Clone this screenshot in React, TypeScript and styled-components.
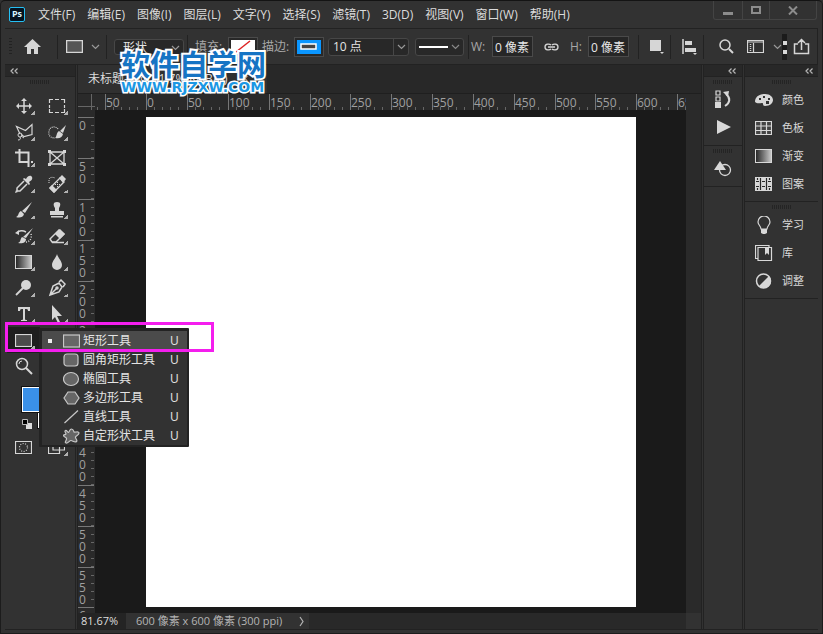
import React from "react";
import styled, { createGlobalStyle } from "styled-components";

const GlobalStyle = createGlobalStyle`
  *, *::before, *::after { box-sizing: border-box; }
  html, body, #root { height: 100%; margin: 0; }
  body {
    background: #323232;
    color: #dcdcdc;
    font: 12px/16px "Open Sans", "Noto Sans CJK SC", sans-serif;
    overflow: hidden;
  }
  button, input, select { font: inherit; color: inherit; }
  svg { display: block; flex: none; }
`;

const line = "#222222";

const Window = styled.div`
  display: flex;
  flex-direction: column;
  height: 100vh;
  background: #323232;
  border: 1px solid #1c1c1c;
  border-top-color: #141414;
  border-radius: 5px 5px 0 0;
`;

const MenuBar = styled.header`
  display: flex;
  height: 27px;
  flex: none;
  padding-left: 8px;
`;
const Logo = styled.div`
  align-self: center;
  width: 16px;
  height: 15px;
  border: 1px solid #26c0f4;
  border-radius: 2px;
  background: #04121f;
  color: #d6f3ff;
  font-size: 9px;
  font-weight: 700;
  line-height: 12px;
  text-align: center;
`;
const Menus = styled.nav`
  display: flex;
  align-items: center;
  gap: 12px;
  margin-left: 13px;
  flex: 1;
`;
const MenuButton = styled.button`
  padding: 0;
  border: 0;
  background: none;
  white-space: nowrap;
`;
const WindowControls = styled.div`
  display: flex;
  height: 19px;
  margin-right: 5px;
  border: 1px solid #444;
  border-top: 0;
  border-radius: 0 0 3px 3px;
`;
const WindowButton = styled.button<{ $w: number }>`
  display: grid;
  place-items: center;
  width: ${(p) => p.$w}px;
  padding: 0;
  border: 0;
  background: none;
  color: #8c8c8c;
  & + & { border-left: 1px solid #444; }
`;

const OptionsBar = styled.div`
  display: flex;
  align-items: center;
  flex: none;
  height: 37px;
  margin: 0 4px;
  padding: 0 7px 0 4px;
  border: solid ${line};
  border-width: 1px 1px 1px 0;
`;
const DotGrip = styled.div`
  width: 3px;
  height: 18px;
  background: repeating-linear-gradient(#222 0 1px, transparent 1px 3px);
`;
const Separator = styled.i<{ $l?: number; $r?: number }>`
  width: 1px;
  height: 24px;
  flex: none;
  margin: 0 ${(p) => p.$r ?? 0}px 0 ${(p) => p.$l ?? 0}px;
  background: #222;
`;
const ToolButton = styled.button<{ $w: number; $dim?: boolean }>`
  display: grid;
  place-items: center;
  flex: none;
  width: ${(p) => p.$w}px;
  height: 24px;
  padding: 0;
  border: 0;
  background: none;
  color: ${(p) => (p.$dim ? "#999" : "#d6d6d6")};
`;
const SelectShell = styled.div<{ $w: number; $h: number; $l: number }>`
  display: grid;
  grid-template-columns: 1fr 15px;
  align-items: center;
  flex: none;
  width: ${(p) => p.$w}px;
  height: ${(p) => p.$h}px;
  margin-left: ${(p) => p.$l}px;
  border: 1px solid #474747;
  border-radius: 3px;
  background: #282828;
  color: #999;
  & > * { grid-row: 1; }
  & > svg {
    grid-column: 2;
    justify-self: center;
    pointer-events: none;
  }
  & > select {
    grid-column: 1 / 3;
    width: 100%;
    padding: 0 0 0 8px;
    border: 0;
    appearance: none;
    background: none;
    color: #e4e4e4;
  }
  & > input {
    width: 100%;
    padding: 0 4px;
    border: 0;
    background: none;
    color: #e4e4e4;
  }
  & > button {
    height: 100%;
    grid-column: 2;
    display: grid;
    place-items: center;
    padding: 0;
    border: 0;
    border-left: 1px solid #474747;
    background: none;
  }
`;
const LineButton = styled.button`
  display: flex;
  align-items: center;
  justify-content: space-between;
  width: 49px;
  height: 18px;
  margin-left: 6px;
  padding: 0 3px;
  border: 1px solid #474747;
  border-radius: 3px;
  background: #282828;
  color: #888 !important;
  &::before {
    content: "";
    width: 29px;
    height: 2px;
    background: #fff;
  }
`;
const FieldLabel = styled.label<{ $w: number; $l?: number }>`
  flex: none;
  width: ${(p) => p.$w}px;
  margin-left: ${(p) => p.$l ?? 0}px;
  color: #a8a8a8;
  white-space: nowrap;
`;
const SizeInput = styled.input`
  flex: none;
  width: 41px;
  height: 21px;
  padding: 0 2px;
  border: 1px solid #4a4a4a;
  background: #262626;
  color: #e8e8e8 !important;
`;
const Swatch = styled.button<{ $fill: string }>`
  display: grid;
  place-items: center;
  flex: none;
  width: 30px;
  height: 20px;
  padding: 0;
  border: 1px solid #4a4a4a;
  background: ${(p) => p.$fill};
  box-shadow: inset 0 0 0 2px #282828;
`;
const Push = styled.span`
  flex: 1;
`;
const DockSlot = styled.i`
  flex: none;
  width: 5px;
  height: 26px;
  margin-right: 5px;
  background: linear-gradient(#d8d8d8 0 0) center 7px / 4px 4px no-repeat,
    linear-gradient(#d8d8d8 0 0) center 16px / 4px 4px no-repeat, #1b1b1b;
`;

const Body = styled.main`
  display: flex;
  flex: 1;
  min-height: 0;
  margin: 0 4px;
  border-bottom: 1px solid ${line};
`;
const BottomEdge = styled.footer`
  flex: none;
  height: 3px;
`;
const SideColumn = styled.aside<{ $w: number }>`
  display: flex;
  flex-direction: column;
  flex: none;
  width: ${(p) => p.$w}px;
`;
const CollapseBar = styled.button<{ $pad: number; $left?: boolean }>`
  display: flex;
  align-items: center;
  justify-content: ${(p) => (p.$left ? "flex-start" : "flex-end")};
  flex: none;
  height: 12px;
  padding: 0 ${(p) => p.$pad}px;
  border: 0;
  border-bottom: 1px solid ${line};
  background: #282828;
  color: #b8b8b8 !important;
`;
const Grip = styled.div`
  flex: none;
  align-self: center;
  width: 20px;
  height: 4px;
  margin: 3px 0 2px;
  background: repeating-linear-gradient(90deg, #242424 0 1px, transparent 1px 2px);
`;
const PanelSet = styled.section`
  display: flex;
  flex-direction: column;
  border-bottom: 1px solid ${line};
  padding-bottom: 3px;
`;
const PanelButton = styled.button`
  display: flex;
  align-items: center;
  height: 28px;
  padding: 0 0 0 10px;
  border: 0;
  background: none;
  color: #d8d8d8;
  font-size: 11px;
  white-space: nowrap;
`;
const PanelIcon = styled.span`
  flex: none;
  width: 27px;
`;
const StripButton = styled.button`
  display: grid;
  place-items: center;
  height: 28px;
  padding: 0 0 2px;
  border: 0;
  background: none;
  color: #d8d8d8;
`;
const Rail = styled.div`
  flex: none;
  width: 3px;
  border: solid ${line};
  border-width: 0 1px;
`;

const ToolGrid = styled.div`
  display: grid;
  grid-template-columns: 33px 33px;
  grid-auto-rows: 26px;
  margin: 7px 0 0 2px;
`;
const Tool = styled.button<{ $active?: boolean; $menu?: boolean }>`
  display: grid;
  place-items: center;
  padding: 0;
  border: 0;
  color: #d6d6d6;
  background: ${(p) =>
    p.$menu
      ? "linear-gradient(135deg, transparent 50%, #b0b0b0 50%) right 5px bottom 4px / 4px 4px no-repeat"
      : "none"};
  background-color: ${(p) => (p.$active ? "#1e1e1e" : "transparent")};
`;
const Colors = styled.div`
  margin: 8px 0 0 17px;
`;
const ColorSwatches = styled.div`
  position: relative;
  height: 32px;
`;
const Foreground = styled.button`
  position: absolute;
  left: 0;
  top: 0;
  width: 26px;
  height: 25px;
  padding: 0;
  border: 1px solid #fff;
  outline: 1px solid #111;
  background: #3a90e8;
`;
const Background = styled.button`
  position: absolute;
  left: 16px;
  top: 16px;
  width: 26px;
  height: 25px;
  padding: 0;
  border: 1px solid #fff;
  outline: 1px solid #111;
  background: #e23c44;
`;
const ModeRow = styled.div`
  display: grid;
  grid-template-columns: 33px 33px;
  height: 26px;
  margin: 5px 0 0 2px;
`;

const Document = styled.section`
  display: flex;
  flex-direction: column;
  flex: 1;
  min-width: 0;
`;
const TabBar = styled.div`
  display: flex;
  flex: none;
  height: 29px;
  background: #282828;
  border-bottom: 1px solid #1f1f1f;
`;
const Tab = styled.button`
  display: flex;
  align-items: center;
  gap: 14px;
  width: 189px;
  padding: 0 10px;
  border: 0;
  background: #303030;
  white-space: nowrap;
`;
const Workspace = styled.div`
  display: grid;
  flex: 1;
  min-height: 0;
  grid-template-columns: 17px 1fr 15px;
  grid-template-rows: 16px 1fr;
`;
const Origin = styled.div`
  background: linear-gradient(90deg, transparent 13px, #666 13px 14px, transparent 14px),
    linear-gradient(transparent 12px, #666 12px 13px, transparent 13px), #2a2a2a;
`;
const TopRuler = styled.div`
  display: flex;
  overflow: hidden;
  padding-left: 10px;
  background: linear-gradient(#666 0 0) 2px 100% / 1px 3px no-repeat, #2a2a2a;
`;
const TopMark = styled.span`
  flex: 0 0 41px;
  height: 16px;
  padding: 2px 1px 0 0;
  border-left: 1px solid #777;
  background: linear-gradient(90deg, transparent 7px, #666 7px) 0 100% / 8px 3px repeat-x content-box;
  color: #a0a0a0;
  line-height: 14px;
  &:nth-child(6n) { flex-basis: 40px; }
`;
const SideRuler = styled.div`
  min-height: 0;
  overflow: hidden;
  padding: 7px 1px 0 0;
  background: #2a2a2a;
`;
const SideMark = styled.div`
  height: 41px;
  padding: 2px 8px 0 1px;
  border-top: 1px solid #777;
  background: linear-gradient(transparent 7px, #666 7px) 100% 0 / 3px 8px repeat-y;
  color: #a0a0a0;
  line-height: 12px;
  overflow-wrap: anywhere;
  &:nth-child(6n) { height: 40px; }
`;
const Pasteboard = styled.div`
  min-height: 0;
  overflow: hidden;
  padding: 7px 50px 6px 51px;
  background: #1a1a1a;
`;
const Artboard = styled.div`
  height: 100%;
  background: #fff;
`;
const ScrollTrack = styled.div`
  grid-column: 3;
  grid-row: 1 / 3;
  background: #2a2a2a;
`;
const StatusBar = styled.div`
  display: grid;
  grid-template-columns: 48px 183px 1fr 15px;
  flex: none;
  height: 16px;
  background: #292929;
  color: #b4b4b4;
  font-size: 11px;
  line-height: 16px;
`;
const Zoom = styled.input`
  width: 100%;
  min-width: 0;
  padding: 0 0 0 3px;
  border: 0;
  background: #242424;
  color: #dedede !important;
`;
const Info = styled.button`
  display: flex;
  align-items: center;
  justify-content: space-between;
  padding: 0 4px 0 10px;
  border: 0;
  background: #323232;
  white-space: nowrap;
`;
const Corner = styled.span`
  grid-column: 4;
  background: #323232;
`;

const Flyout = styled.div`
  position: absolute;
  left: 39px;
  top: 328px;
  width: 150px;
  padding: 3px 2px 2px 3px;
  border-radius: 1px;
  background: #232323;
`;
const FlyoutItem = styled.button<{ $on?: boolean }>`
  display: grid;
  grid-template-columns: 15px 17px 1fr 17px;
  align-items: center;
  width: 100%;
  height: 19px;
  padding: 1px 0 0 6px;
  border: 0;
  background: ${(p) => (p.$on ? "#4b4b4b" : "#323232")};
  color: #e4e4e4;
  text-align: left;
  white-space: nowrap;
  &::before {
    content: "";
    width: 4px;
    height: 4px;
    background: ${(p) => (p.$on ? "#eee" : "transparent")};
  }
`;
const FlyoutName = styled.span`
  padding-left: 3px;
`;
const Highlight = styled.div`
  position: absolute;
  left: 5px;
  top: 322px;
  width: 209px;
  height: 30px;
  border: 3px solid #f41eee;
  pointer-events: none;
`;
const Watermark = styled.div`
  position: absolute;
  left: 121px;
  top: 48px;
  pointer-events: none;
  color: #1674c4;
  font-weight: 700;
  white-space: nowrap;
  -webkit-text-stroke: 4px #fff;
  paint-order: stroke fill;
`;
const WatermarkName = styled.div`
  font-size: 29px;
  line-height: 34px;
`;
const WatermarkSite = styled.div`
  font: 700 14px/10px "DejaVu Sans", sans-serif;
  color: #1c98e4;
  -webkit-text-stroke-width: 3px;
`;

const Svg = ({ w = 18, h = 18, children }: { w?: number; h?: number; children: React.ReactNode }) => (
  <svg width={w} height={h} viewBox={`0 0 ${w} ${h}`} fill="none" stroke="currentColor" strokeWidth="1.5" aria-hidden="true">
    {children}
  </svg>
);
const solid = { fill: "currentColor", stroke: "none" };
const Chevron = () => (
  <Svg w={9} h={6}><path d="M1 1l3.5 3.5L8 1" strokeWidth="1.2" /></Svg>
);
const DoubleChevron = () => (
  <Svg w={8} h={6}><path d="M3.500 .5L1 3l2.500 2.500M7.500 .5L5 3l2.500 2.500" strokeWidth="1.2" /></Svg>
);
const GradientIcon = ({ id }: { id: string }) => (
  <Svg w={17} h={14}>
    <defs><linearGradient id={id}><stop stopColor="#222" /><stop offset="1" stopColor="#ccc" /></linearGradient></defs>
    <rect x=".5" y=".5" width="16" height="13" fill={`url(#${id})`} strokeWidth="1" />
  </Svg>
);

const tools: { name: string; icon: React.ReactNode; plain?: boolean; active?: boolean }[] = [
  { name: "移动工具", icon: <Svg><path d="M9 3v12M3 9h12" /><path d="M9 1l3 3H6zM9 17l-3-3h6zM1 9l3-3v6zM17 9l-3 3V6z" {...solid} /></Svg> },
  { name: "矩形选框工具", icon: <Svg><path d="M1.500 6V2.500H5M7 2.500h4M13 2.500h3.500V6M16.500 8v3M16.500 12v3.500H13M11 15.500H7M5 15.500H1.500V12M1.500 11V8" strokeWidth="1.200" /></Svg> },
  { name: "多边形套索工具", icon: <Svg><path d="M5 11L1.500 3.500l9 4L17 1.500v10l-8 2-3-2" strokeWidth="1.200" /><circle cx="5" cy="12" r="2" strokeWidth="1" /><path d="M6 13l3 2M5 14c1 2 0 3-2 3" strokeWidth="1" /></Svg> },
  { name: "快速选择工具", icon: <Svg><path d="M10 6C8 3 2 3 1 8c-1 5 2 7 6 7" strokeDasharray="1 1" strokeWidth="1.200" /><path d="M18 2l-3 8-3-2zM11 8l4 3c-1 4-4 5-8 4 2-1 1-5 4-7z" {...solid} /></Svg> },
  { name: "裁剪工具", icon: <Svg><path d="M4.500 0v13H14M0 3.500h13.500V18M16 13h2" strokeWidth="2" /></Svg> },
  { name: "图框工具", plain: true, icon: <Svg><path d="M2 3h14v12H2zM2 3l14 12M16 3L2 15" strokeWidth="1.300" /><path d="M0 1h3v3H0zM15 1h3v3h-3zM0 14h3v3H0zM15 14h3v3h-3z" {...solid} /></Svg> },
  { name: "吸管工具", icon: <Svg><path d="M9 6L2 13v3h3l7-7" strokeWidth="1.500" /><path d="M8 4l1-1 2 1c2-4 5-4 6-2s-1 4-3 5l1 2-1 1zM0 18l1-3 2 2z" {...solid} /></Svg> },
  { name: "污点修复画笔工具", icon: <Svg><path d="M12 3l4 4L6 17l-4-4z" strokeWidth="1.400" /><path d="M11 3l3-3 4 4-3 4zM4 10l5 5-3 3-5-5z" {...solid} /><path d="M9 7h1v1H9zM7 9h1v1H7zM11 9h1v1h-1zM9 11h1v1H9zM9 9h1v1H9z" {...solid} /><path d="M1 8V4c1-2 4-2 6-1" strokeDasharray="1 1" strokeWidth="1" /></Svg> },
  { name: "画笔工具", icon: <Svg><path d="M17 1l-7 11-3-2zM6 10l3 3c-1 4-5 4-8 3 3-1 2-5 5-6z" {...solid} /></Svg> },
  { name: "仿制图章工具", icon: <Svg><path d="M9 1c4 0 4 3 2 6v3h5v4H2v-4h5V7C5 4 5 1 9 1zM3 15h12v1.500H3z" {...solid} /></Svg> },
  { name: "历史记录画笔工具", icon: <Svg><path d="M18 1l-7 10-3-1zM7 10l4 2c0 4-4 5-8 4 3-1 2-4 4-6zM0 6l4-3v5z" {...solid} /><path d="M3 5c3-2 6-1 8 0" /><path d="M16 7c1 4-1 8-5 8" strokeDasharray="1 1.500" /></Svg> },
  { name: "橡皮擦工具", icon: <Svg><path d="M2 12L11 3l5 4-8 8H4z" strokeWidth="1.400" /><path d="M7 7l5-5 5 5-5 5z" {...solid} /><path d="M4 15.500h12" /></Svg> },
  { name: "渐变工具", icon: <GradientIcon id="tool-gradient" /> },
  { name: "模糊工具", icon: <Svg><path d="M9 1c1 4 5 7 5 11a5 5 0 01-10 0c0-4 4-7 5-11z" {...solid} /></Svg> },
  { name: "减淡工具", icon: <Svg><circle cx="11" cy="6" r="5" {...solid} /><path d="M8 9l-7 7" strokeWidth="1.800" /></Svg> },
  { name: "钢笔工具", icon: <Svg><path d="M2 16l3-9 6-3 3 4-3 5zM3 15l6-6M11 3l2-2 4 4-2 3" /><circle cx="9" cy="9" r="1" /></Svg> },
  { name: "文字工具", icon: <Svg><path d="M3 2h12v4h-2c0-2-1-2-3-2v10c0 1 1 1 2 1v1H6v-1c1 0 2 0 2-1V4C6 4 5 4 5 6H3z" {...solid} /></Svg> },
  { name: "路径选择工具", icon: <Svg><path d="M4 0l10 11-5 0 3 6-2 1-3-6-3 3z" {...solid} /></Svg> },
  { name: "矩形工具", active: true, icon: <Svg w={17} h={13}><rect x=".5" y=".5" width="16" height="12" fill="#4b4b4b" strokeWidth="1.200" /></Svg> },
];

const shapes: { name: string; icon: React.ReactNode }[] = [
  { name: "矩形工具", icon: <rect x=".5" y="2" width="16" height="12" /> },
  { name: "圆角矩形工具", icon: <rect x="1" y="2" width="14" height="12" rx="3" /> },
  { name: "椭圆工具", icon: <ellipse cx="8" cy="8" rx="7.500" ry="6.500" /> },
  { name: "多边形工具", icon: <path d="M5 2h7l4 6-4 6H5L1 8z" /> },
  { name: "直线工具", icon: <path d="M1.500 14L15 1.500" /> },
  { name: "自定形状工具", icon: <path d="M5.500 4.500c1-.5 1-3.500 3-3.500s2 2 2.500 3c1 .5 5-1 5 1s-3 2.500-3.500 4 2.500 3 1 4.500-4-1-5.500-1-3 3-5 2.500S4 12 3.500 10.500 .5 9 .5 7.500 3 7 3 6 1 3 2.500 2.500 4.500 4.500 5.500 4.500z" /> },
];

const ShapeIcon = ({ children }: { children: React.ReactNode }) => (
  <svg width="17" height="16" viewBox="0 0 17 16" fill="#666" stroke="#c8c8c8" strokeWidth="1.200" aria-hidden="true">{children}</svg>
);

const primaryPanels = [
  { name: "颜色", icon: <Svg><path fillRule="evenodd" d="M10 3c5 0 8 3 8 6s-3 6-8 6c-3 0-1-3-3-3s-5 1-7-1C0 6 4 3 10 3zM4 7v2h2V7zM8 5v2h2V5zM13 7v2h2V7zM11 10v3h3v-3z" {...solid} /></Svg> },
  { name: "色板", icon: <Svg w={17} h={14}><path d="M.5 .5h16v13H.5zM.5 5h16M.5 9.500h16M6 .5v13M11.500 .5v13" strokeWidth="1.200" fill="#444" /></Svg> },
  { name: "渐变", icon: <GradientIcon id="panel-gradient" /> },
  { name: "图案", icon: <Svg w={17} h={14}><path d="M0 0h17v14H0z" {...solid} /><path d="M5.500 1v12M11.500 1v12M1 4.500h3M7 4.500h3M13 4.500h3M1 9.500h3M7 9.500h3M13 9.500h3M2.500 1v2M2.500 11v2M14.500 1v2M14.500 11v2" stroke="#282828" strokeWidth="1.200" /></Svg> },
];
const secondaryPanels = [
  { name: "学习", icon: <Svg><path d="M6 13c0-3-3-4-3-7a6 6 0 0112 0c0 3-3 4-3 7z" strokeWidth="1.200" /><path d="M6 13h6v4l-2 1H8l-2-1z" {...solid} /></Svg> },
  { name: "库", icon: <Svg><path d="M3 3.500h13.500v13H3zM3 14.500H.500v-13H14V3" strokeWidth="1.200" /><path d="M10 4h4v7l-2-2-2 2z" {...solid} /></Svg> },
  { name: "调整", icon: <Svg><circle cx="8.500" cy="9" r="7" /><path d="M14 4a7 7 0 01-10 10z" {...solid} /></Svg> },
];

const menus = ["文件(F)", "编辑(E)", "图像(I)", "图层(L)", "文字(Y)", "选择(S)", "滤镜(T)", "3D(D)", "视图(V)", "窗口(W)", "帮助(H)"];
const topMarks = [50, 0, 50, 100, 150, 200, 250, 300, 350, 400, 450, 500, 550, 600, 650];
const sideMarks = [0, 50, 100, 150, 200, 250, 300, 350, 400, 450, 500, 550, 600];

export default function App() {
  return (
    <>
      <GlobalStyle />
      <Window>
        <MenuBar>
          <Logo>Ps</Logo>
          <Menus>{menus.map((m) => <MenuButton key={m}>{m}</MenuButton>)}</Menus>
          <WindowControls>
            <WindowButton $w={28} aria-label="最小化"><Svg w={10} h={10}><path d="M0 8.500h10" strokeWidth="3" /></Svg></WindowButton>
            <WindowButton $w={27} aria-label="最大化"><Svg w={10} h={8}><path d="M1 1h8v6H1z" strokeWidth="2" /></Svg></WindowButton>
            <WindowButton $w={47} aria-label="关闭"><Svg w={10} h={9}><path d="M1 .5l8 8M9 .5l-8 8" strokeWidth="2" /></Svg></WindowButton>
          </WindowControls>
        </MenuBar>

        <OptionsBar>
          <DotGrip />
          <ToolButton $w={40} aria-label="主页"><Svg w={17} h={15}><path d="M8.500 0L17 8h-3v7H10v-5H7v5H3V8H0z" {...solid} /></Svg></ToolButton>
          <Separator $l={5} $r={4} />
          <ToolButton $w={24} aria-label="矩形"><Svg w={17} h={13}><path d="M.5 .5h16v12H.5z" fill="#555" /></Svg></ToolButton>
          <ToolButton $w={18} $dim aria-label="工具预设"><Chevron /></ToolButton>
          <Separator $l={2} />
          <SelectShell $w={70} $h={16} $l={7}>
            <select aria-label="模式"><option>形状</option></select>
            <Chevron />
          </SelectShell>
          <Separator $l={3} $r={7} />
          <FieldLabel $w={33} htmlFor="fill">填充:</FieldLabel>
          <Swatch id="fill" $fill="#fff"><Svg w={26} h={16}><path d="M6 13L20 2" stroke="#d22" strokeWidth="1.500" /></Svg></Swatch>
          <FieldLabel $w={32} $l={4} htmlFor="stroke">描边:</FieldLabel>
          <Swatch id="stroke" $fill="#0a96ff"><Svg w={18} h={8}><path d="M1 1h15v5H1z" fill="#444" stroke="#fff" /></Svg></Swatch>
          <SelectShell $w={81} $h={18} $l={4}>
            <input aria-label="描边宽度" defaultValue="10 点" />
            <button aria-label="选择宽度"><Chevron /></button>
          </SelectShell>
          <LineButton aria-label="描边类型"><Chevron /></LineButton>
          <Separator $l={4} $r={2} />
          <FieldLabel $w={21} htmlFor="width">W:</FieldLabel>
          <SizeInput id="width" defaultValue="0 像素" />
          <ToolButton $w={36} aria-label="链接"><Svg w={15} h={8}><path d="M7 2C6 1 1 0 1 4s5 3 6 2M8 2c1-1 6-2 6 2s-5 3-6 2M4 4h7" strokeWidth="1.300" /></Svg></ToolButton>
          <FieldLabel $w={18} $l={1} htmlFor="height">H:</FieldLabel>
          <SizeInput id="height" defaultValue="0 像素" />
          <Separator $l={9} $r={4} />
          <ToolButton $w={26} aria-label="路径操作"><Svg w={15} h={15}><path d="M1 1h11v11H1zM11 13h4l-2 2z" {...solid} /></Svg></ToolButton>
          <Separator $l={1} $r={5} />
          <ToolButton $w={26} aria-label="路径对齐"><Svg w={15} h={16}><path d="M1 0v15" /><path d="M3 2h7v4H3zM3 9h11v4H3zM11 14h4l-2 2z" {...solid} /></Svg></ToolButton>
          <Separator $l={1} />
          <Push />
          <ToolButton $w={24} aria-label="搜索"><Svg w={15} h={15}><circle cx="6" cy="6" r="5" /><path d="M10 10l4 4" strokeWidth="2" /></Svg></ToolButton>
          <ToolButton $w={34} aria-label="工作区"><Svg w={17} h={13}><path d="M.5 .5h16v12H.5zM1 2h15M6.500 3v9" strokeWidth="1.200" /><path d="M3.500 4v7" strokeDasharray="1 1" /></Svg></ToolButton>
          <ToolButton $w={10} $dim aria-label="工作区菜单"><Chevron /></ToolButton>
          <DockSlot />
          <ToolButton $w={18} aria-label="共享"><Svg w={17} h={17}><path d="M5 6H1.500v9.500h14V6H12M8.500 12V2M5 5l3.500-3.500L12 5" /></Svg></ToolButton>
        </OptionsBar>

        <Body>
          <SideColumn $w={70}>
            <CollapseBar $pad={5} $left aria-label="折叠工具栏"><DoubleChevron /></CollapseBar>
            <Grip />
            <ToolGrid>
              {tools.map((t) => <Tool key={t.name} $active={t.active} $menu={!t.plain} aria-label={t.name}>{t.icon}</Tool>)}
              <span />
              <Tool aria-label="缩放工具"><Svg><circle cx="7" cy="7" r="5.500" /><path d="M11 11l6 6" strokeWidth="2" /><path d="M4 7a3 3 0 013-3" strokeWidth="1" /></Svg></Tool>
            </ToolGrid>
            <Colors>
              <ColorSwatches>
                <Background aria-label="背景色" />
                <Foreground aria-label="前景色" />
              </ColorSwatches>
              <Svg w={10} h={10}><path d="M4 4h6v6H4z" fill="#ddd" stroke="none" /><path d="M.5 .5h5v5h-5z" fill="#000" stroke="#bbb" strokeWidth="1" /></Svg>
            </Colors>
            <ModeRow>
              <Tool aria-label="快速蒙版"><Svg w={17} h={13}><path d="M.5 .5h16v12H.5z" strokeWidth="1.200" /><circle cx="8.500" cy="6.500" r="4" strokeDasharray="1 1.500" strokeWidth="1.200" /></Svg></Tool>
              <Tool $menu aria-label="屏幕模式"><Svg w={17} h={13}><path d="M.5 3.500h11v9H.5zM5 3V.500h11.500V9H5z" strokeWidth="1.200" /></Svg></Tool>
            </ModeRow>
          </SideColumn>
          <Rail />

          <Document>
            <TabBar><Tab><span>未标题-1 @ 81.7%(RGB/8)</span><span>×</span></Tab></TabBar>
            <Workspace>
              <Origin />
              <TopRuler>{topMarks.map((m, i) => <TopMark key={i}>{m}</TopMark>)}</TopRuler>
              <SideRuler>{sideMarks.map((m) => <SideMark key={m}>{m}</SideMark>)}</SideRuler>
              <Pasteboard><Artboard /></Pasteboard>
              <ScrollTrack />
            </Workspace>
            <StatusBar>
              <Zoom aria-label="缩放比例" defaultValue="81.67%" />
              <Info>600 像素 x 600 像素 (300 ppi)<Svg w={6} h={11}><path d="M1 1l3 4.500L1 10" strokeWidth="1.200" /></Svg></Info>
              <Corner />
            </StatusBar>
          </Document>
          <Rail />

          <SideColumn $w={38}>
            <CollapseBar $pad={6} aria-label="展开面板"><DoubleChevron /></CollapseBar>
            <PanelSet>
              <Grip />
              <StripButton aria-label="历史记录"><Svg><path d="M2 1h4v4H2zM2 7h4v4H2z" strokeWidth="1.200" /><path d="M1 12h6v6H1zM9 2l6-1-1 6z" {...solid} /><path d="M12 4c5 4 4 9-1 12" strokeWidth="2" /></Svg></StripButton>
              <StripButton aria-label="动作"><Svg><path d="M3 2l14 7-14 7z" {...solid} /></Svg></StripButton>
            </PanelSet>
            <PanelSet>
              <Grip />
              <StripButton aria-label="形状"><Svg><path d="M6 2l6 9H0z" {...solid} /><circle cx="11" cy="11" r="5.500" strokeWidth="1.300" /></Svg></StripButton>
            </PanelSet>
          </SideColumn>
          <Rail />
          <SideColumn $w={73}>
            <CollapseBar $pad={5} aria-label="折叠面板"><DoubleChevron /></CollapseBar>
            <PanelSet>
              <Grip />
              {primaryPanels.map((p) => <PanelButton key={p.name}><PanelIcon>{p.icon}</PanelIcon>{p.name}</PanelButton>)}
            </PanelSet>
            <PanelSet>
              <Grip />
              {secondaryPanels.map((p) => <PanelButton key={p.name}><PanelIcon>{p.icon}</PanelIcon>{p.name}</PanelButton>)}
            </PanelSet>
          </SideColumn>
        </Body>
        <BottomEdge />
      </Window>

      <Flyout>
        {shapes.map((s, i) => (
          <FlyoutItem key={s.name} $on={i === 0}>
            <ShapeIcon>{s.icon}</ShapeIcon>
            <FlyoutName>{s.name}</FlyoutName>
            <span>U</span>
          </FlyoutItem>
        ))}
      </Flyout>
      <Highlight />
      <Watermark>
        <WatermarkName>软件自学网</WatermarkName>
        <WatermarkSite>WWW.RJZXW.COM</WatermarkSite>
      </Watermark>
    </>
  );
}
